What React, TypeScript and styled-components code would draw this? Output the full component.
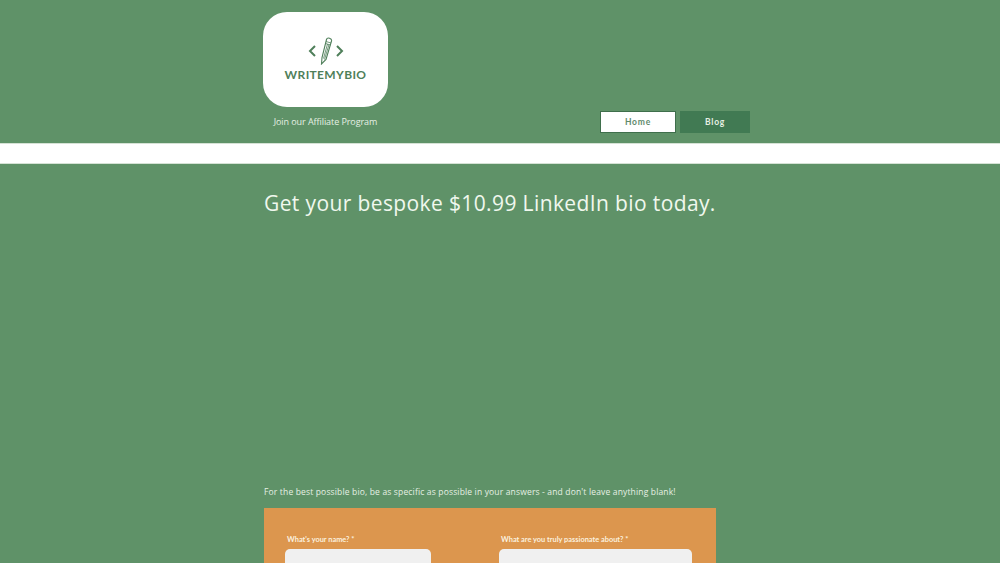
import React from "react";
import styled, { createGlobalStyle } from "styled-components";

const GlobalStyle = createGlobalStyle`
  html, body {
    margin: 0;
    padding: 0;
    height: 563px;
    overflow: hidden;
    background-color: #5f9268;
  }
`;

const Logo = () => (
  <svg width="36" height="28" viewBox="0 0 36 28" fill="none" stroke="#4f7f5a">
    <path d="M7 9 L2 14 L7 19" strokeWidth="2" />
    <path d="M29 9 L34 14 L29 19" strokeWidth="2" />
    <path d="M18.5 2.5 L14 20.5 L13.5 27 L18 22.5 L23.5 4 Q24 2 21.5 1.2 Q19 0.6 18.5 2.5 Z" strokeWidth="1.1" />
    <path d="M18 4.5 L23 6 M17.5 6.5 L22.5 8 M19.5 7 L15.5 21.5 M21 7.5 L16.5 22.5" strokeWidth="0.8" />
  </svg>
);

const App = () => {
  return (
    <Page>
      <GlobalStyle />
      <Header>
        <Brand>
          <LogoCard>
            <Logo />
            <LogoText>WRITEMYBIO</LogoText>
          </LogoCard>
          <Affiliate>Join our Affiliate Program</Affiliate>
        </Brand>
        <Nav>
          <NavButton $active>Home</NavButton>
          <NavButton>Blog</NavButton>
        </Nav>
      </Header>
      <Strip />
      <Content>
        <Title>Get your bespoke $10.99 LinkedIn bio today.</Title>
        <Hint>
          For the best possible bio, be as specific as possible in your answers
          - and don't leave anything blank!
        </Hint>
        <FormCard>
          <Field $width="146px">
            <Label>What's your name? *</Label>
            <Input />
          </Field>
          <Field $width="193px">
            <Label>What are you truly passionate about? *</Label>
            <Input />
          </Field>
        </FormCard>
      </Content>
    </Page>
  );
};

export default App;

const Page = styled.div`
  width: 1000px;
  height: 563px;
  overflow: hidden;
  background-color: #5f9268;
  font-family: "Open Sans", sans-serif;
`;

const Header = styled.div`
  height: 143px;
  box-sizing: border-box;
  padding: 12px 250px 10px 263px;
  display: flex;
  justify-content: space-between;
  align-items: flex-end;
`;

const Brand = styled.div`
  width: 125px;
  align-self: flex-start;
  display: flex;
  flex-direction: column;
  align-items: center;
`;

const LogoCard = styled.div`
  width: 125px;
  height: 95px;
  box-sizing: border-box;
  padding-top: 25px;
  background-color: #ffffff;
  border-radius: 24px;
  display: flex;
  flex-direction: column;
  align-items: center;
`;

const LogoText = styled.div`
  margin-top: 2px;
  font-family: "Lato", sans-serif;
  font-size: 12px;
  line-height: 16px;
  font-weight: 700;
  letter-spacing: 0.35px;
  color: #4f7f5a;
`;

const Affiliate = styled.div`
  margin-top: 8px;
  font-size: 9px;
  line-height: 14px;
  letter-spacing: -0.07px;
  white-space: nowrap;
  color: #e6f0e4;
`;

const Nav = styled.div`
  display: flex;
  gap: 4px;
`;

const NavButton = styled.div<{ $active?: boolean }>`
  width: ${(p) => (p.$active ? "76px" : "70px")};
  height: 22px;
  box-sizing: border-box;
  display: flex;
  align-items: center;
  justify-content: center;
  font-family: "Lato", sans-serif;
  font-size: 8.5px;
  font-weight: 700;
  letter-spacing: 0.8px;
  background-color: ${(p) => (p.$active ? "#ffffff" : "#417a53")};
  color: ${(p) => (p.$active ? "#5f8a6c" : "#e6f0e4")};
  border: ${(p) => (p.$active ? "1px solid #3f6f4c" : "none")};
`;

const Strip = styled.div`
  height: 19px;
  background-color: #ffffff;
  border-top: 1px solid #d5e2d5;
  border-bottom: 1px solid #d5e2d5;
`;

const Content = styled.div`
  width: 452px;
  margin-left: 264px;
  display: flex;
  flex-direction: column;
`;

const Title = styled.div`
  margin-top: 23px;
  font-size: 21px;
  line-height: 32px;
  letter-spacing: 0.38px;
  white-space: nowrap;
  color: #f0f8ee;
`;

const Hint = styled.div`
  margin-top: 266px;
  font-size: 8.5px;
  line-height: 14px;
  letter-spacing: 0.16px;
  white-space: nowrap;
  color: #e6f0e4;
`;

const FormCard = styled.div`
  margin-top: 9px;
  height: 120px;
  box-sizing: border-box;
  padding: 25px 24px 0 21px;
  background-color: #dc964e;
  display: flex;
  justify-content: space-between;
`;

const Field = styled.div<{ $width: string }>`
  width: ${(p) => p.$width};
`;

const Label = styled.div`
  margin-left: 2px;
  font-family: "Lato", sans-serif;
  font-size: 7.4px;
  line-height: 14px;
  font-weight: 700;
  white-space: nowrap;
  color: #fbf0df;
`;

const Input = styled.div`
  margin-top: 2px;
  height: 40px;
  background-color: #f0f0f0;
  border-radius: 5px;
`;
